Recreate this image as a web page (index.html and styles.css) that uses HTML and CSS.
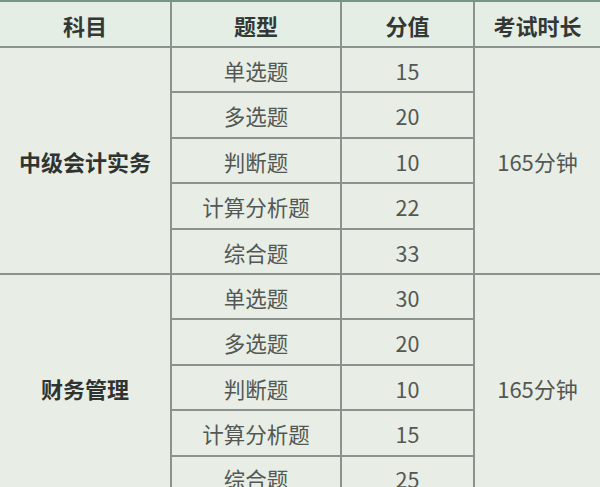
FILE: index.html
```html
<!DOCTYPE html>
<html lang="zh">
<head>
<meta charset="utf-8">
<link rel="stylesheet" href="styles.css">
</head>
<body>
<div class="table">
  <div class="cell head">科目</div>
  <div class="cell head">题型</div>
  <div class="cell head">分值</div>
  <div class="cell head">考试时长</div>

  <div class="cell subject r1">中级会计实务</div>
  <div class="cell">单选题</div><div class="cell">15</div>
  <div class="cell dur r1">165分钟</div>
  <div class="cell">多选题</div><div class="cell">20</div>
  <div class="cell">判断题</div><div class="cell">10</div>
  <div class="cell">计算分析题</div><div class="cell">22</div>
  <div class="cell">综合题</div><div class="cell">33</div>

  <div class="cell subject r2">财务管理</div>
  <div class="cell">单选题</div><div class="cell">30</div>
  <div class="cell dur r2">165分钟</div>
  <div class="cell">多选题</div><div class="cell">20</div>
  <div class="cell">判断题</div><div class="cell">10</div>
  <div class="cell">计算分析题</div><div class="cell">15</div>
  <div class="cell">综合题</div><div class="cell">25</div>
</div>
</body>
</html>
```
FILE: styles.css
```css
html, body {
  margin: 0;
  padding: 0;
  background: #e8eee6;
  overflow: hidden;
}
.table {
  display: grid;
  grid-template-columns: 170px 168px 131px 1fr;
  grid-template-rows: 44px repeat(10, 43.4px);
  gap: 2px;
  background: #8c928d;
  border-top: 2px solid #789584;
  font-family: "Noto Sans CJK SC", "Noto Sans", sans-serif;
  font-size: 21.5px;
}
.cell {
  background: #e8eee6;
  color: #535854;
  display: flex;
  align-items: center;
  justify-content: center;
  line-height: 1;
  padding-top: 2px;
  box-sizing: border-box;
}
.head {
  background: #e4eee5;
  color: #333835;
  font-weight: bold;
  font-size: 22px;
}
.subject {
  font-weight: bold;
  color: #2f3431;
  font-size: 22px;
}
.dur {
  font-size: 22px;
}
.subject.r1 { grid-column: 1; grid-row: 2 / span 5; }
.subject.r2 { grid-column: 1; grid-row: 7 / span 5; }
.dur.r1 { grid-column: 4; grid-row: 2 / span 5; }
.dur.r2 { grid-column: 4; grid-row: 7 / span 5; }
```
